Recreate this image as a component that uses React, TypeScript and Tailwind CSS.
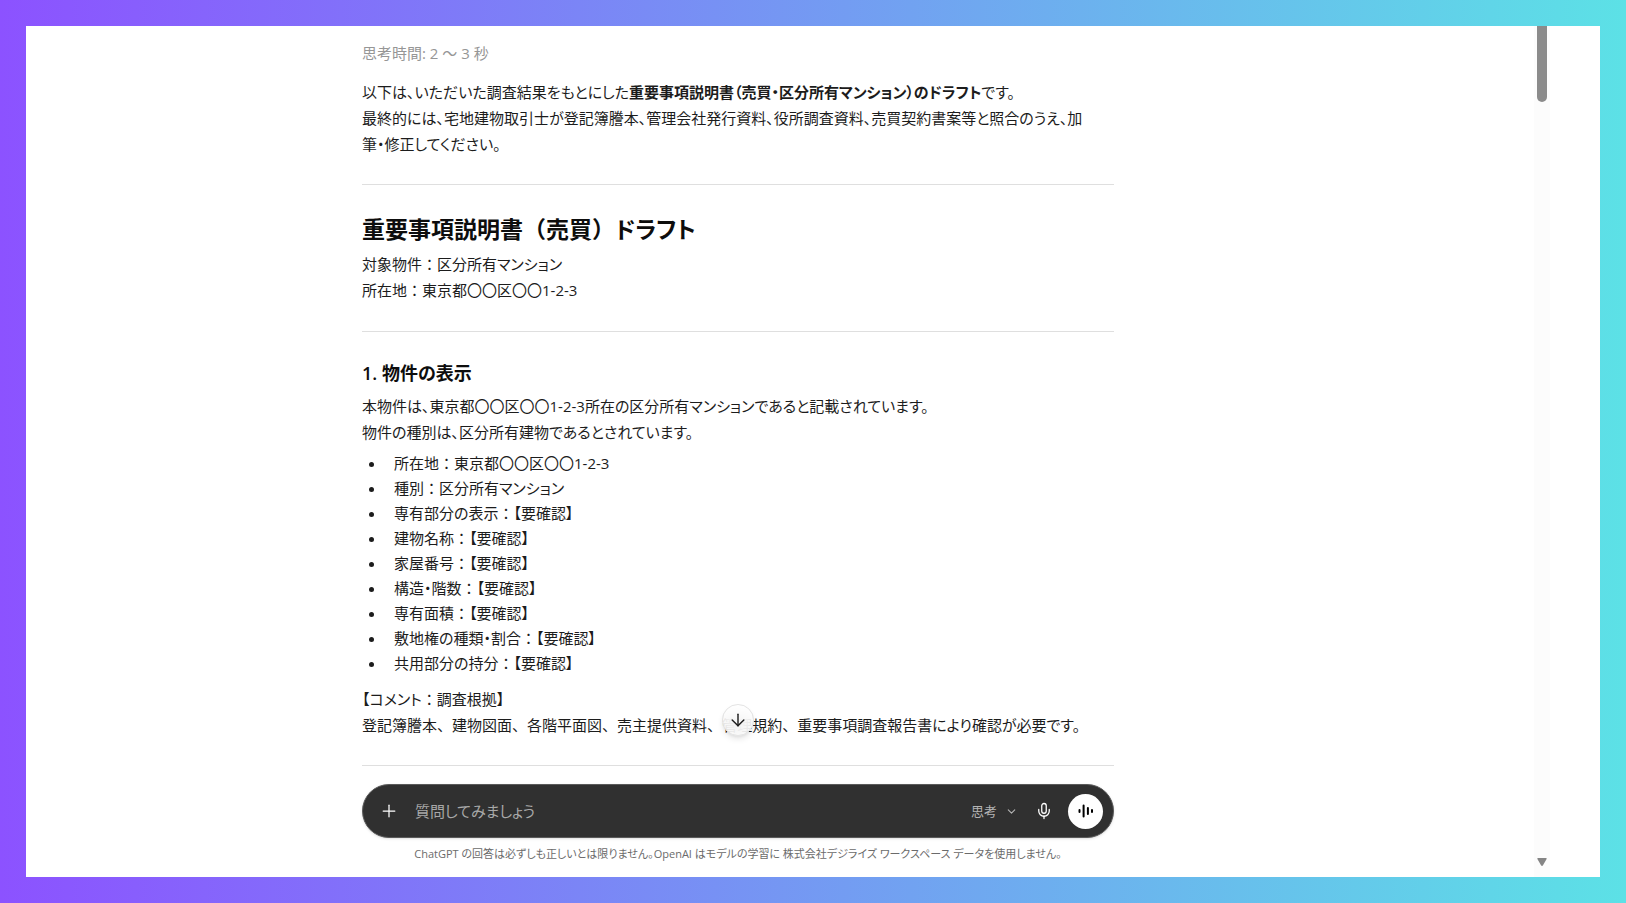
import { ArrowDown, ChevronDown, Mic, Plus } from "lucide-react";

const items = [
  { label: "所在地", value: "東京都〇〇区〇〇1-2-3" },
  { label: "種別", value: "区分所有マンション" },
  { label: "専有部分の表示", value: "【要確認】" },
  { label: "建物名称", value: "【要確認】" },
  { label: "家屋番号", value: "【要確認】" },
  { label: "構造・階数", value: "【要確認】" },
  { label: "専有面積", value: "【要確認】" },
  { label: "敷地権の種類・割合", value: "【要確認】" },
  { label: "共用部分の持分", value: "【要確認】" },
];

// Full-width punctuation, kept out of the proportional kana setting
function Full({ children }: { children: string }) {
  return <span className="[font-feature-settings:normal]">{children}</span>;
}

function Divider({ className = "" }: { className?: string }) {
  return <hr className={`border-t border-[#dfdfdf] ${className}`} />;
}

function VoiceIcon() {
  return (
    <svg viewBox="0 0 20 20" className="size-5" fill="none" stroke="currentColor" strokeWidth="2" strokeLinecap="round">
      <path d="M3.500 9v2M7.600 4.500v11M11.900 7v6M16 9v2" />
    </svg>
  );
}

function Composer() {
  return (
    <form className="flex h-[54px] items-center rounded-full border border-[#5a5a5a] bg-[#303030] pr-2.5 pl-4 text-white shadow-sm">
      <button type="button" aria-label="追加" className="flex size-5 items-center justify-center">
        <Plus size={20} strokeWidth={1.5} />
      </button>
      <input
        type="text"
        aria-label="質問"
        placeholder="質問してみましょう"
        className="ml-4 min-w-0 flex-1 bg-transparent text-[15px] outline-none placeholder:text-[#a8a8a8]"
      />
      <button type="button" className="flex items-center gap-2 text-[13px] text-[#b4b4b4]">
        思考
        <ChevronDown size={13} strokeWidth={2} />
      </button>
      <button type="button" aria-label="音声入力" className="ml-4 flex size-5 items-center justify-center">
        <Mic size={18} strokeWidth={1.7} />
      </button>
      <button
        type="button"
        aria-label="音声モード"
        className="ml-3.5 flex size-[35px] items-center justify-center rounded-full bg-white text-black"
      >
        <VoiceIcon />
      </button>
    </form>
  );
}

function Scrollbar() {
  return (
    <div className="mr-[50px] flex w-4 flex-col items-center justify-between bg-[#fcfcfc]">
      <div className="h-[76px] w-2.5 rounded-b-full bg-[#8b8b8b]" />
      <svg viewBox="0 0 10 8" className="mb-[11px] h-2 w-2.5" fill="#858585">
        <path d="M1 0h8q1.200 0 .6 1L6 7.300q-1 1.200-2 0L.4 1Q-.2 0 1 0z" />
      </svg>
    </div>
  );
}

export default function App() {
  return (
    <div className="flex h-screen bg-linear-to-r/srgb from-[#8c52ff] to-[#5ce1e6] p-[26px] font-['Open_Sans','Noto_Sans_CJK_JP',sans-serif]">
      <div className="flex min-w-0 flex-1 overflow-hidden bg-white">
        <div className="grid min-w-0 flex-1 grid-cols-[336fr_minmax(0,752px)_420fr]">
          <main
            lang="ja"
            className="col-start-2 pt-[15px] text-[15px] leading-[26px] text-[#1c1c1c] [font-feature-settings:'palt']"
          >
            <p className="leading-6 text-[#969696]">思考時間: 2 ～ 3 秒</p>

            <p className="mt-3.5">
              以下は、いただいた調査結果をもとにした
              <strong className="font-semibold">重要事項説明書（売買・区分所有マンション）のドラフト</strong>です。
              <br />
              最終的には、宅地建物取引士が登記簿謄本、管理会社発行資料、役所調査資料、売買契約書案等と照合のうえ、加
              <br />
              筆・修正してください。
            </p>

            <Divider className="mt-[27px] mb-7" />

            <h1 className="text-[23px] leading-8 font-semibold text-[#0d0d0d]">
              重要事項説明書<Full>（</Full>売買<Full>）</Full>ドラフト
            </h1>
            <p className="mt-1.5">
              対象物件<Full>：</Full>区分所有マンション
              <br />
              所在地<Full>：</Full>東京都〇〇区〇〇1-2-3
            </p>

            <Divider className="mt-7 mb-[27px]" />

            <h2 className="text-lg leading-7 font-semibold text-[#0d0d0d]">1. 物件の表示</h2>
            <p className="mt-1.5">
              本物件は、東京都〇〇区〇〇1-2-3所在の区分所有マンションであると記載されています。
              <br />
              物件の種別は、区分所有建物であるとされています。
            </p>
            <ul className="mt-1.5 list-disc pl-6 leading-[25px]">
              {items.map((item) => (
                <li key={item.label} className="pl-2">
                  {item.label}
                  <Full>：</Full>
                  {item.value}
                </li>
              ))}
            </ul>

            {/* Comment block, with the scroll-to-bottom button over it */}
            <div className="relative mt-2.5">
              <p>
                【コメント<Full>：</Full>調査根拠】
                <br />
                登記簿謄本<Full>、</Full>建物図面<Full>、</Full>各階平面図<Full>、</Full>売主提供資料<Full>、</Full>
                管理規約<Full>、</Full>重要事項調査報告書により確認が必要です。
              </p>
              <button
                type="button"
                aria-label="一番下へスクロール"
                className="absolute bottom-0.5 left-1/2 flex size-8 -translate-x-1/2 items-center justify-center rounded-full border border-[#e3e3e3] bg-white/80 shadow-md backdrop-blur-sm"
              >
                <ArrowDown size={20} strokeWidth={1.7} />
              </button>
            </div>

            <Divider className="mt-[27px] mb-[18px]" />

            <Composer />
            <p className="mt-2 text-center text-[11px] leading-4 text-[#6b6b6b]">
              ChatGPT の回答は必ずしも正しいとは限りません。OpenAI はモデルの学習に 株式会社デジライズ ワークスペース データを使用しません。
            </p>
          </main>
        </div>
        <Scrollbar />
      </div>
    </div>
  );
}
